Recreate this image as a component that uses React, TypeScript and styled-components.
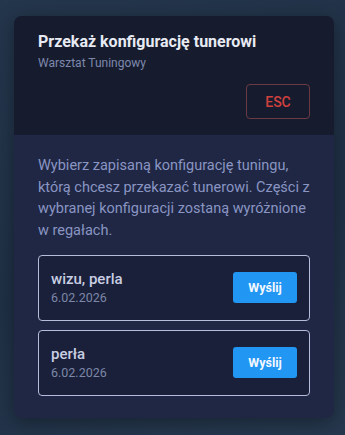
import React from 'react';
import styled, { createGlobalStyle } from 'styled-components';

const GlobalStyle = createGlobalStyle`
    html, body {
        margin: 0;
        padding: 0;
        width: 345px;
        height: 435px;
        overflow: hidden;
        background: #223247;
        font-family: Roboto, "Liberation Sans", sans-serif;
    }
`;

const Backdrop = styled.div`
    width: 345px;
    height: 435px;
    box-sizing: border-box;
    padding: 16px 11px 17px 14px;
    background: linear-gradient(160deg, #24364c 0%, #1f3045 55%, #26384e 100%);
`;

const Modal = styled.div`
    width: 320px;
    height: 402px;
    border-radius: 8px;
    overflow: hidden;
    background: #1f2744;
    display: flex;
    flex-direction: column;
    box-shadow: 0 4px 18px rgba(0, 0, 0, 0.35);
`;

const Header = styled.div`
    background: #161c2e;
    padding: 16px 24px 16px 24px;
    display: flex;
    flex-direction: column;
`;

const Title = styled.h1`
    margin: 0;
    font-size: 16px;
    font-weight: 700;
    line-height: 20px;
    color: #e8ebf3;
`;

const Subtitle = styled.div`
    margin-top: 3px;
    font-size: 12px;
    line-height: 16px;
    color: #7e88ac;
`;

const EscButton = styled.button`
    align-self: flex-end;
    margin-top: 13px;
    width: 64px;
    height: 35px;
    border: 1px solid #6b3a44;
    border-radius: 4px;
    background: transparent;
    color: #d0403f;
    font-family: Roboto, "Liberation Sans", sans-serif;
    font-size: 14px;
    font-weight: 500;
    cursor: pointer;
`;

const Body = styled.div`
    padding: 20px 24px 21px 24px;
    display: flex;
    flex-direction: column;
    gap: 9px;
`;

const Intro = styled.p`
    margin: 0 0 4px 0;
    font-size: 14.5px;
    line-height: 21.7px;
    color: #8a95c3;
`;

const ConfigItem = styled.div`
    height: 66px;
    box-sizing: border-box;
    border: 1px solid #b6bddb;
    border-radius: 4px;
    background: #1a2039;
    padding: 0 12px 0 12px;
    display: flex;
    align-items: center;
    justify-content: space-between;
`;

const ItemInfo = styled.div`
    display: flex;
    flex-direction: column;
`;

const ItemName = styled.div`
    font-size: 15px;
    font-weight: 500;
    line-height: 19px;
    color: #c9cee3;
`;

const ItemDate = styled.div`
    font-size: 12.5px;
    line-height: 17px;
    color: #7c87a8;
`;

const SendButton = styled.button`
    width: 64px;
    height: 31px;
    border: none;
    border-radius: 3px;
    background: #2196f3;
    color: #f4f8ff;
    font-family: Roboto, "Liberation Sans", sans-serif;
    font-size: 12.5px;
    font-weight: 700;
    cursor: pointer;
`;

type TConfig = {
    name: string;
    date: string;
};

const configs: TConfig[] = [
    { name: 'wizu, perla', date: '6.02.2026' },
    { name: 'perła', date: '6.02.2026' },
];

const App = (): React.ReactElement => {
    return (
        <>
            <GlobalStyle />
            <Backdrop>
                <Modal>
                    <Header>
                        <Title>Przekaż konfigurację tunerowi</Title>
                        <Subtitle>Warsztat Tuningowy</Subtitle>
                        <EscButton>ESC</EscButton>
                    </Header>
                    <Body>
                        <Intro>
                            Wybierz zapisaną konfigurację tuningu, którą chcesz przekazać tunerowi.
                            Części z wybranej konfiguracji zostaną wyróżnione w regałach.
                        </Intro>
                        {configs.map(c => (
                            <ConfigItem key={c.name}>
                                <ItemInfo>
                                    <ItemName>{c.name}</ItemName>
                                    <ItemDate>{c.date}</ItemDate>
                                </ItemInfo>
                                <SendButton>Wyślij</SendButton>
                            </ConfigItem>
                        ))}
                    </Body>
                </Modal>
            </Backdrop>
        </>
    );
};

export default App;
